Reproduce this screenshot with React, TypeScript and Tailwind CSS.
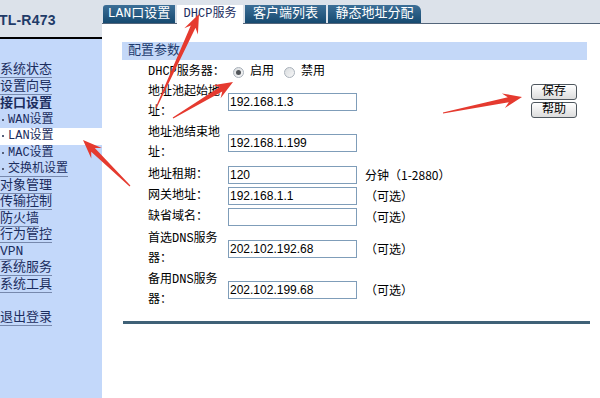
import React from "react";

type Side = { t: string; u?: boolean; b?: boolean; sub?: boolean; active?: boolean };

const side: Side[] = [
  { t: "系统状态", u: true },
  { t: "设置向导", u: true },
  { t: "接口设置", b: true },
  { t: "WAN设置", sub: true },
  { t: "LAN设置", sub: true, active: true },
  { t: "MAC设置", sub: true },
  { t: "交换机设置", sub: true, u: true },
  { t: "对象管理", u: true },
  { t: "传输控制", u: true },
  { t: "防火墙", u: true },
  { t: "行为管控", u: true },
  { t: "VPN", u: true },
  { t: "系统服务", u: true },
  { t: "系统工具", u: true },
  { t: "" },
  { t: "退出登录", u: true },
];

type Row = { label: string; h: string; value?: string; note?: string; radio?: boolean };

const rows: Row[] = [
  { label: "DHCP服务器：", h: "h-[20px]", radio: true },
  { label: "地址池起始地址：", h: "h-[40px]", value: "192.168.1.3" },
  { label: "地址池结束地址：", h: "h-[42px]", value: "192.168.1.199" },
  { label: "地址租期：", h: "h-[21px]", value: "120", note: "分钟（1-2880）" },
  { label: "网关地址：", h: "h-[21px]", value: "192.168.1.1", note: "（可选）" },
  { label: "缺省域名：", h: "h-[22px]", value: "", note: "（可选）" },
  { label: "首选DNS服务器：", h: "h-[41px]", value: "202.102.192.68", note: "（可选）" },
  { label: "备用DNS服务器：", h: "h-[41px]", value: "202.102.199.68", note: "（可选）" },
];

function arrowPoints(tx: number, ty: number, hx: number, hy: number) {
  const dx = hx - tx;
  const dy = hy - ty;
  const L = Math.hypot(dx, dy);
  const ux = dx / L;
  const uy = dy / L;
  const nx = -uy;
  const ny = ux;
  const pts: [number, number][] = [
    [tx + nx * 0.6, ty + ny * 0.6],
    [hx - ux * 14 + nx * 2.6, hy - uy * 14 + ny * 2.6],
    [hx - ux * 19 + nx * 7.5, hy - uy * 19 + ny * 7.5],
    [hx, hy],
    [hx - ux * 19 - nx * 7.5, hy - uy * 19 - ny * 7.5],
    [hx - ux * 14 - nx * 2.6, hy - uy * 14 - ny * 2.6],
    [tx - nx * 0.6, ty - ny * 0.6],
  ];
  return pts.map((p) => `${p[0].toFixed(1)},${p[1].toFixed(1)}`).join(" ");
}

function Radio({ checked }: { checked?: boolean }) {
  return (
    <span className="flex items-center justify-center w-[11px] h-[11px] rounded-full border border-[#a9b1ba] bg-gradient-to-br from-[#d9dcdf] to-[#f7f7f7]">
      {checked && <span className="w-[5px] h-[5px] rounded-full bg-[#505458]" />}
    </span>
  );
}

export default function App() {
  return (
    <div className="relative w-[600px] h-[398px] overflow-hidden flex bg-white font-['Liberation_Mono','Noto_Sans_CJK_SC',monospace]">
      {/* left column */}
      <div className="w-[102px] flex flex-col shrink-0">
        <div className="h-[37px] bg-[#dce2ea] flex items-center pt-[3px]">
          <span className="ml-[-1px] font-['Liberation_Sans',sans-serif] font-bold text-[14px] text-[#1f3b68] tracking-[0.2px]">
            TL-R473
          </span>
        </div>
        <div className="h-[2px] bg-black" />
        <div className="flex-1 bg-[#c3d8fa] pt-[23px] flex flex-col">
          {side.map((s, i) => (
            <div
              key={i}
              className={`h-[16.5px] flex items-center ${s.active ? "bg-white" : ""}`}
            >
              {s.sub ? (
                <span
                  className={`flex items-center text-[12px] leading-[14px] text-[#1b2d5e] ${s.u ? "border-b border-[#7789ad]" : ""}`}
                >
                  <span className="w-[2px] h-[2px] bg-[#55607a] ml-[2px] mr-[4px]" />
                  <span>{s.t}</span>
                </span>
              ) : (
                <span
                  className={`text-[13px] leading-[15px] text-[#1b2d5e] ${s.b ? "font-bold" : ""} ${s.u ? "border-b border-[#7789ad]" : ""}`}
                >
                  {s.t}
                </span>
              )}
            </div>
          ))}
        </div>
      </div>

      {/* right column */}
      <div className="flex-1 flex flex-col">
        <div className="h-[24px] bg-[#dce2ea] flex items-end gap-[2px] pl-[1px] border-b border-[#53657a]">
          <div className="w-[72px] h-[18px] rounded-tl-[3px] bg-gradient-to-b from-[#3c6f97] to-[#154a70] text-white text-[13px] leading-[18px] text-center">
            LAN口设置
          </div>
          <div className="relative w-[66px] h-[19px] mb-[-1px] bg-white text-[#1b2d5e] text-[12px] leading-[19px] text-center">
            DHCP服务
          </div>
          <div className="w-[81px] h-[18px] bg-gradient-to-b from-[#3c6f97] to-[#154a70] text-white text-[13px] leading-[18px] text-center">
            客户端列表
          </div>
          <div className="w-[93px] h-[18px] rounded-tr-[6px] bg-gradient-to-b from-[#3c6f97] to-[#154a70] text-white text-[13px] leading-[18px] text-center">
            静态地址分配
          </div>
        </div>

        <div className="flex-1 bg-white pl-[20px] pt-[18px]">
          <div className="w-[465px] h-[18px] bg-[#c4d8f8] pl-[6px] text-[13px] leading-[18px] text-[#1d3b6d]">
            配置参数
          </div>

          <div className="w-[465px] flex">
            <div className="pl-[26px] pt-[2px] flex flex-col">
              {rows.map((r, i) => (
                <div key={i} className={`${r.h} flex items-center`}>
                  <div className="w-[80px] text-[12px] leading-[20px] text-black">{r.label}</div>
                  {r.radio ? (
                    <div className="flex items-center text-[12px] text-black">
                      <span className="ml-[5px]">
                        <Radio checked />
                      </span>
                      <span className="ml-[6px]">启用</span>
                      <span className="ml-[10px]">
                        <Radio />
                      </span>
                      <span className="ml-[6px]">禁用</span>
                    </div>
                  ) : (
                    <>
                      <div className="w-[129px] h-[18px] border border-[#7f9db9] pl-[1px] font-['Liberation_Sans',sans-serif] text-[12px] leading-[16px] text-black">
                        {r.value}
                      </div>
                      {r.note && (
                        <div className="ml-[8px] text-[12px] text-black whitespace-nowrap font-['Noto_Sans_CJK_SC',sans-serif]">
                          {r.note}
                        </div>
                      )}
                    </>
                  )}
                </div>
              ))}
            </div>
            <div className="ml-auto mr-[10px] mt-[24px] flex flex-col gap-[2px]">
              <div className="w-[46px] h-[16px] border border-[#4f575e] rounded-[3px] bg-gradient-to-b from-white to-[#dcdcdc] text-[12px] leading-[14px] text-center text-black">
                保存
              </div>
              <div className="w-[46px] h-[16px] border border-[#4f575e] rounded-[3px] bg-gradient-to-b from-white to-[#dcdcdc] text-[12px] leading-[14px] text-center text-black">
                帮助
              </div>
            </div>
          </div>

          <div className="mt-[11px] ml-[1px] w-[467px] h-[3px] bg-[#3f6177]" />
        </div>
      </div>

      {/* red annotation arrows */}
      <svg className="absolute inset-0 pointer-events-none" width="600" height="398" viewBox="0 0 600 398">
        <polygon points={arrowPoints(156, 108, 199, 14)} fill="#e53a2f" />
        <polygon points={arrowPoints(173, 118, 233, 82)} fill="#e53a2f" />
        <polygon points={arrowPoints(443, 113, 522, 97)} fill="#e53a2f" />
        <polygon points={arrowPoints(130, 186, 83, 140)} fill="#e53a2f" />
      </svg>
    </div>
  );
}
